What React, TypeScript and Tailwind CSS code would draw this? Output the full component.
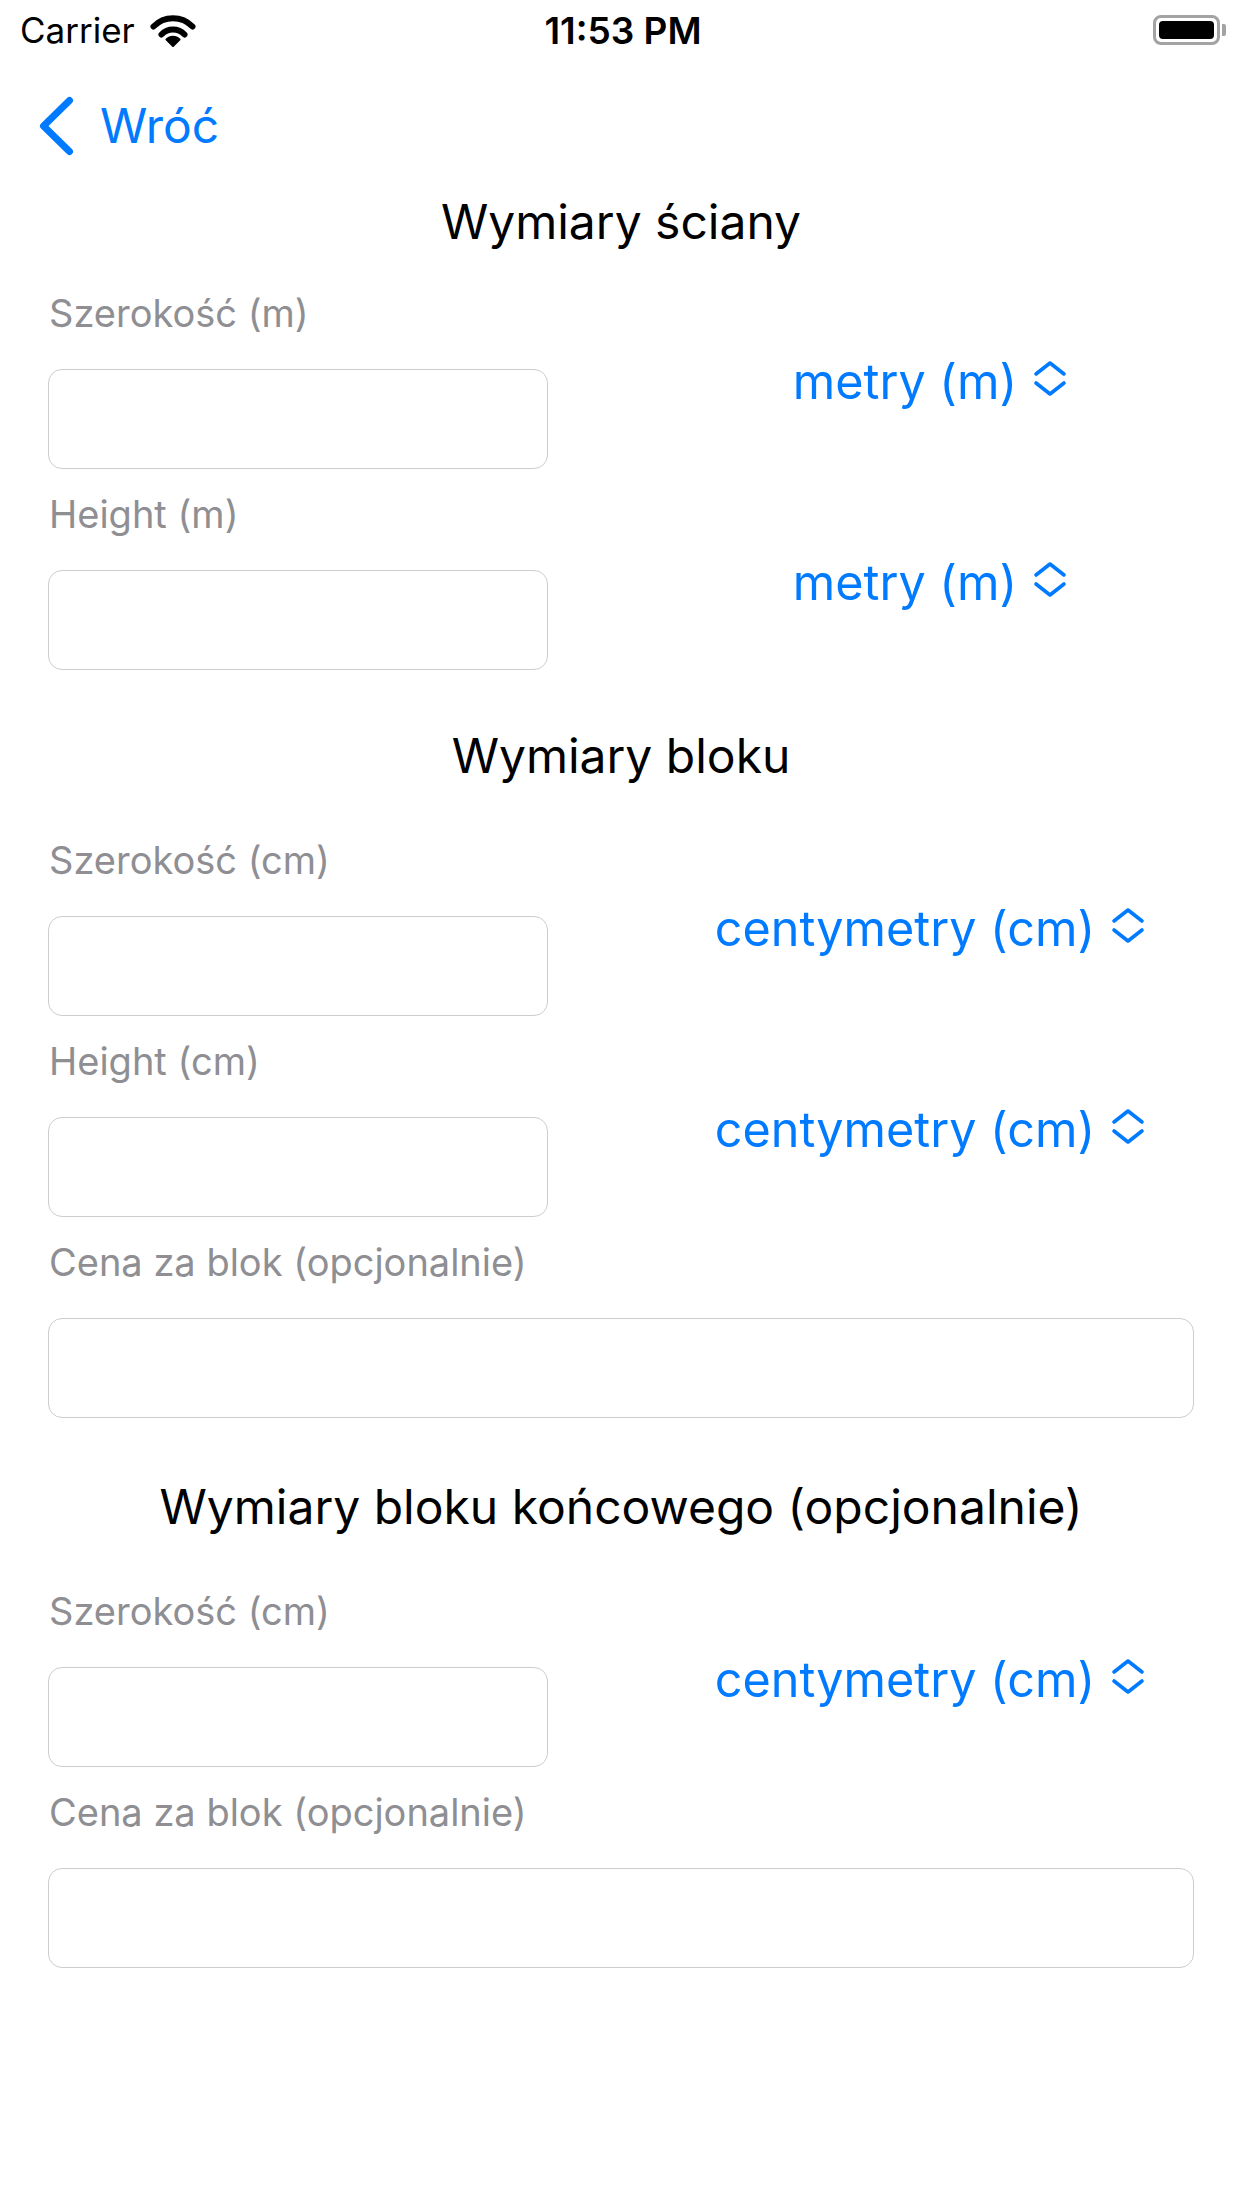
import React from "react";

type UnitRowProps = {
  label: string;
  unit: string;
};

function UpDownChevron() {
  return (
    <svg width="34" height="37" viewBox="0 0 34 37" className="ml-[16px] mb-[8px] shrink-0">
      <path d="M3 14 L17 3 L31 14" fill="none" stroke="#007aff" strokeWidth="3.6" strokeLinecap="round" strokeLinejoin="round" />
      <path d="M3 23 L17 34 L31 23" fill="none" stroke="#007aff" strokeWidth="3.6" strokeLinecap="round" strokeLinejoin="round" />
    </svg>
  );
}

function InputBox() {
  return <div className="h-[100px] rounded-[14px] border-[1.5px] border-[#cdcdd1] bg-white" />;
}

function UnitRow({ label, unit }: UnitRowProps) {
  return (
    <div className="flex">
      <div className="w-[500px] shrink-0">
        <div className="h-[56px] leading-[56px] text-[38px] text-[#8e8e93] pl-[1px]">{label}</div>
        <div className="mt-[28px]">
          <InputBox />
        </div>
      </div>
      <div className="flex flex-1 items-center justify-center pl-[118px] pt-[10px]">
        <span className="text-[48.5px] leading-[56px] text-[#007aff] whitespace-nowrap">{unit}</span>
        <UpDownChevron />
      </div>
    </div>
  );
}

function PriceRow({ label }: { label: string }) {
  return (
    <div>
      <div className="h-[56px] leading-[56px] text-[38px] text-[#8e8e93] pl-[1px]">{label}</div>
      <div className="mt-[28px]">
        <InputBox />
      </div>
    </div>
  );
}

function SectionTitle({ children }: { children: React.ReactNode }) {
  return <h2 className="h-[56px] leading-[56px] text-center text-[48px] text-black">{children}</h2>;
}

function StatusBar() {
  return (
    <div className="grid h-[60px] grid-cols-[1fr_auto_1fr] items-center pl-[20px] pr-[16px]">
      <div className="flex items-center">
        <span className="text-[35px] leading-none text-black">Carrier</span>
        {/* wifi */}
        <svg width="48" height="34" viewBox="0 0 48 34" className="ml-[14px]">
          <path d="M4.5 13.5 A27 27 0 0 1 43.5 13.5" fill="none" stroke="black" strokeWidth="6" strokeLinecap="round" />
          <path d="M12.5 21.5 A16 16 0 0 1 35.5 21.5" fill="none" stroke="black" strokeWidth="6" strokeLinecap="round" />
          <path d="M24 33 L17.5 26.5 A9 9 0 0 1 30.5 26.5 Z" fill="black" stroke="black" strokeWidth="2" strokeLinejoin="round" />
        </svg>
      </div>
      <span className="text-[37px] font-semibold leading-none text-black">11:53 PM</span>
      <div className="flex items-center justify-end">
        <div className="h-[30px] w-[67px] rounded-[8px] border-[3px] border-[#a3a3a3] p-[3px]">
          <div className="h-full w-full rounded-[4px] bg-black" />
        </div>
        <div className="ml-[2px] h-[12px] w-[4px] rounded-r-[2px] bg-[#a3a3a3]" />
      </div>
    </div>
  );
}

export default function App() {
  return (
    <div className="min-h-[2208px] w-[1242px] bg-white font-['Inter','Noto_Sans',sans-serif]">
      <StatusBar />

      {/* nav bar */}
      <div className="flex h-[132px] items-center pl-[37px]">
        <svg width="38" height="62" viewBox="0 0 38 62">
          <path d="M32.5 5.5 L6.5 31 L32.5 56.5" fill="none" stroke="#007aff" strokeWidth="7" strokeLinecap="round" strokeLinejoin="round" />
        </svg>
        <span className="ml-[25px] text-[48px] leading-none text-[#007aff]">Wróć</span>
      </div>

      <div className="px-[48px] pt-[2px]">
        <SectionTitle>Wymiary ściany</SectionTitle>
        <div className="mt-[35px] flex flex-col gap-[17px]">
          <UnitRow label="Szerokość (m)" unit="metry (m)" />
          <UnitRow label="Height (m)" unit="metry (m)" />
        </div>

        <div className="mt-[58px]">
          <SectionTitle>Wymiary bloku</SectionTitle>
        </div>
        <div className="mt-[48px] flex flex-col gap-[17px]">
          <UnitRow label="Szerokość (cm)" unit="centymetry (cm)" />
          <UnitRow label="Height (cm)" unit="centymetry (cm)" />
          <PriceRow label="Cena za blok (opcjonalnie)" />
        </div>

        <div className="mt-[61px]">
          <SectionTitle>Wymiary bloku końcowego (opcjonalnie)</SectionTitle>
        </div>
        <div className="mt-[48px] flex flex-col gap-[17px]">
          <UnitRow label="Szerokość (cm)" unit="centymetry (cm)" />
          <PriceRow label="Cena za blok (opcjonalnie)" />
        </div>
      </div>
    </div>
  );
}
